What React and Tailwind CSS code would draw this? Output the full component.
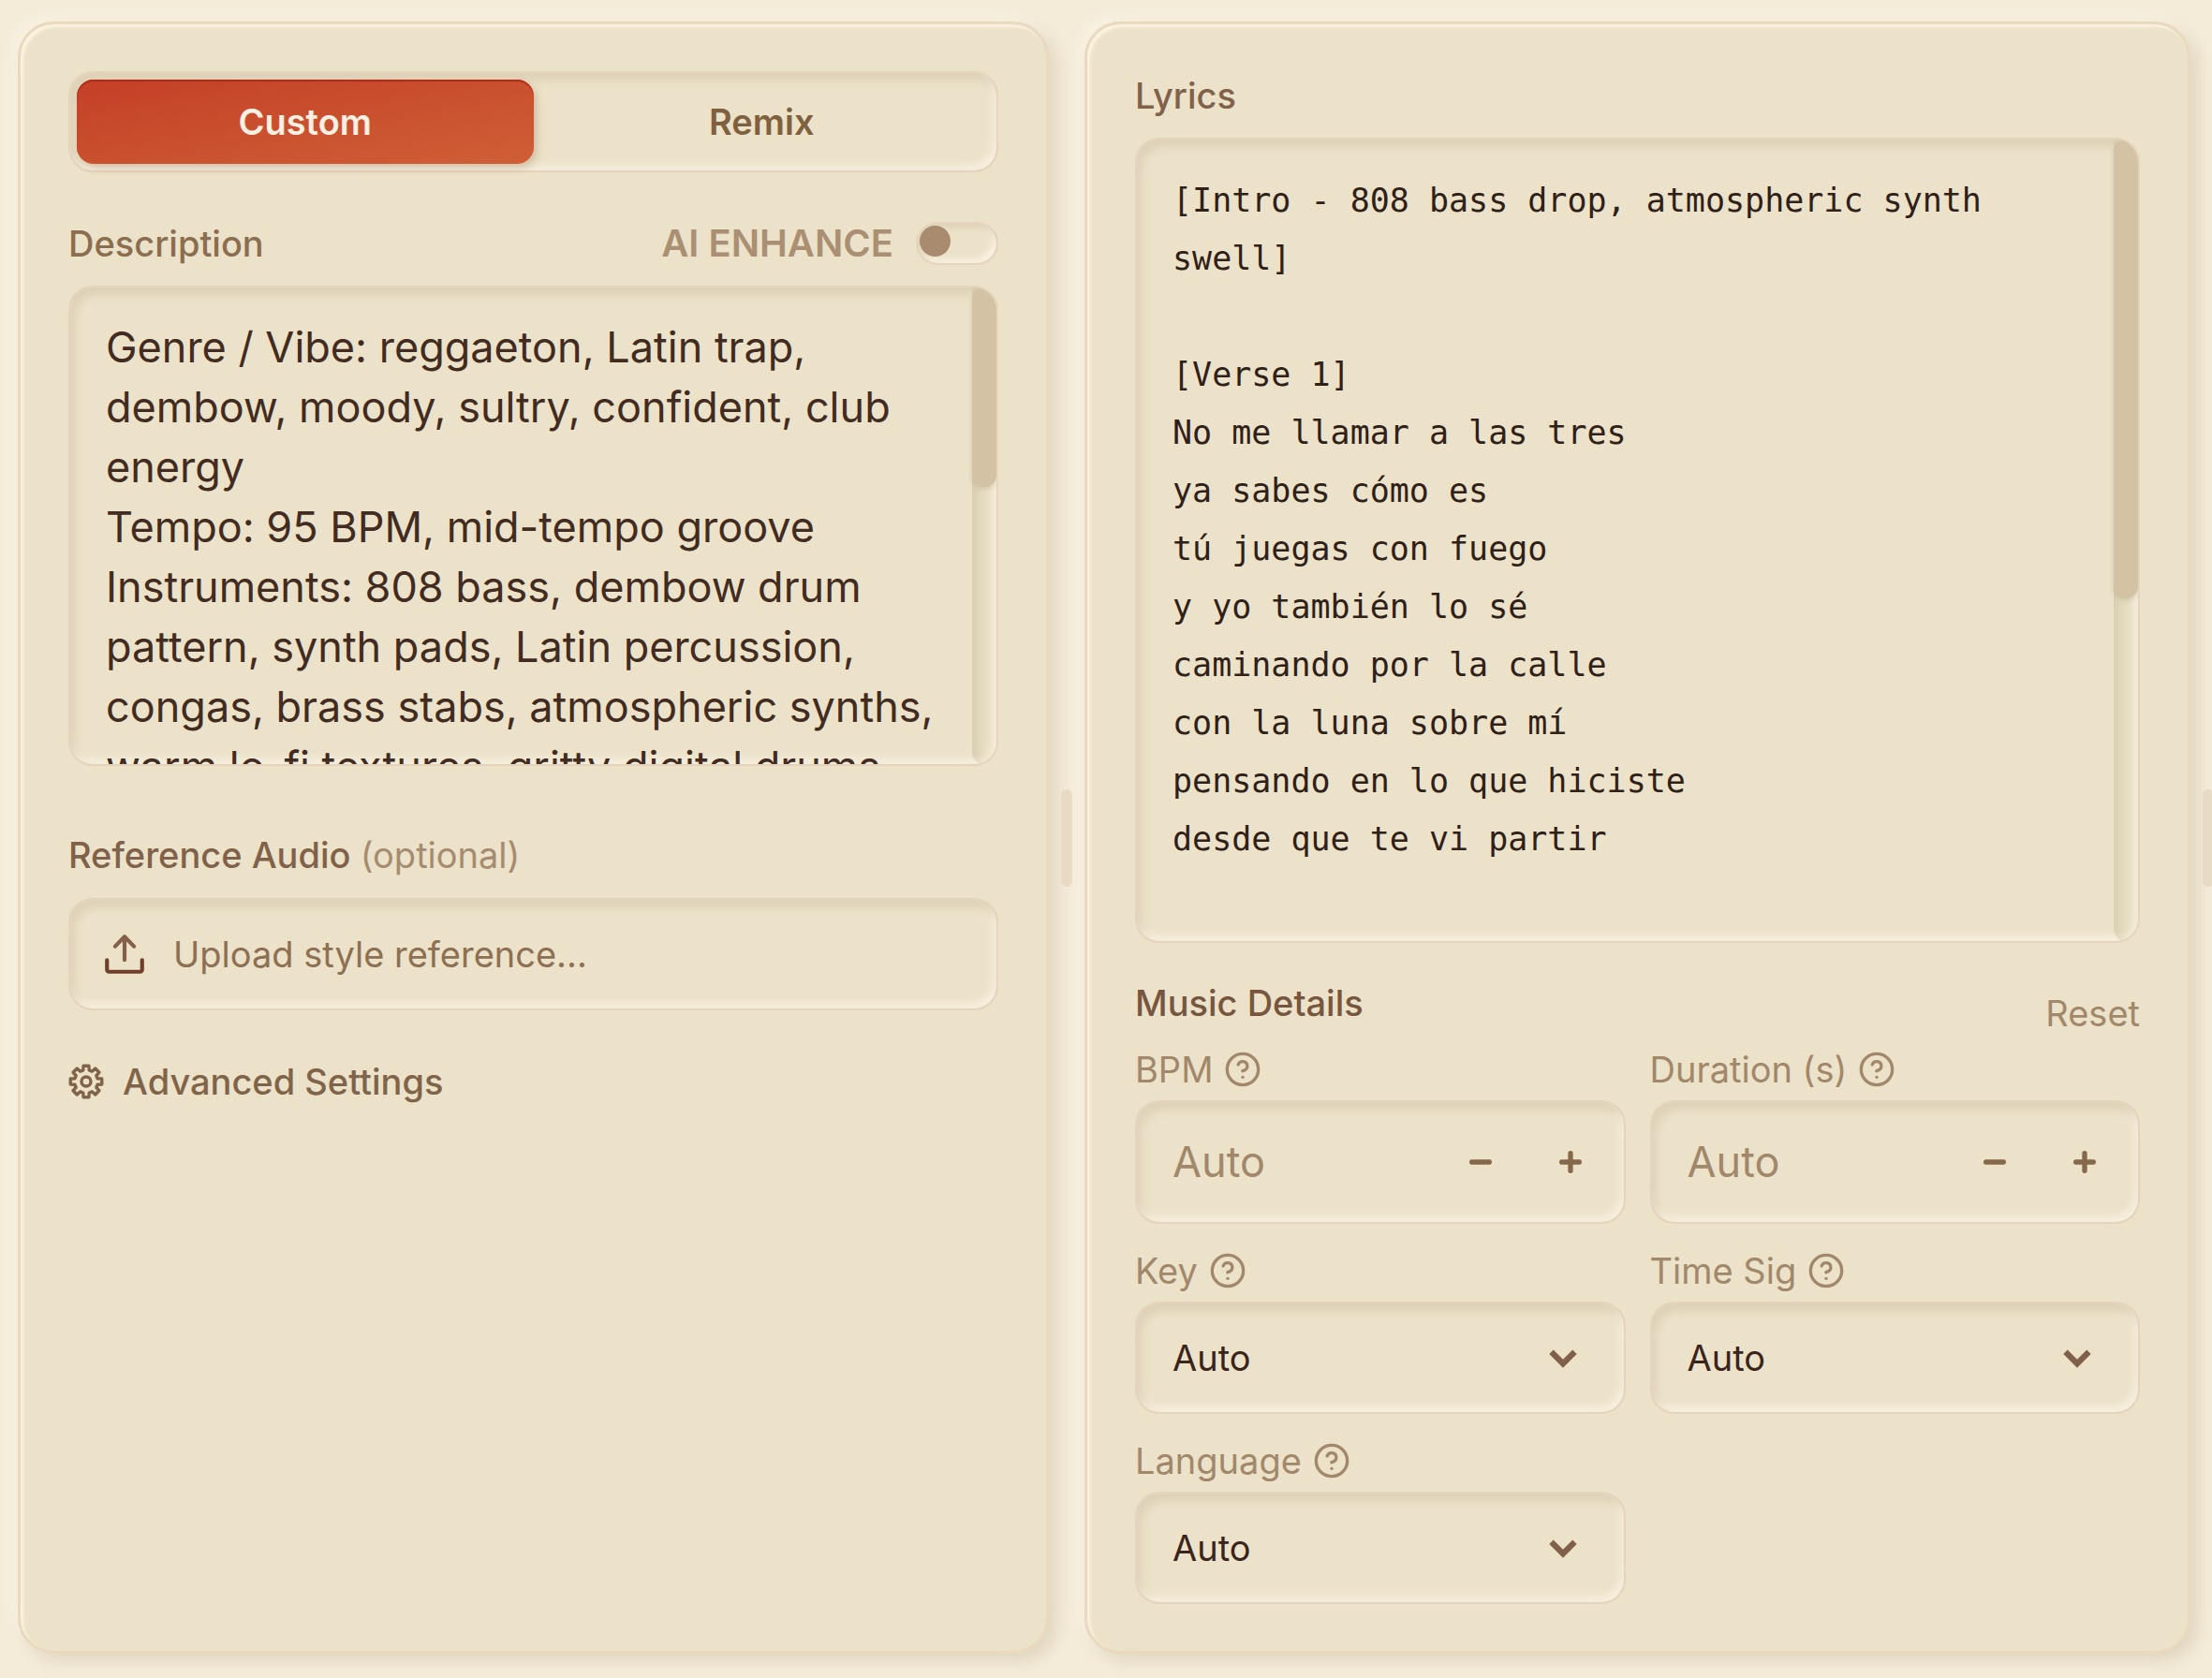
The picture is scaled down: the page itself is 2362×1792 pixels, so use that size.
import React, { useState } from 'react';
import { Minus, Plus, CircleHelp, ChevronDown } from 'lucide-react';

const DESCRIPTION = `Genre / Vibe: reggaeton, Latin trap, dembow, moody, sultry, confident, club energy
Tempo: 95 BPM, mid-tempo groove
Instruments: 808 bass, dembow drum pattern, synth pads, Latin percussion, congas, brass stabs, atmospheric synths, warm lo-fi textures, gritty digital drums`;

const LYRICS = `[Intro - 808 bass drop, atmospheric synth swell]

[Verse 1]
No me llamar a las tres
ya sabes cómo es
tú juegas con fuego
y yo también lo sé
caminando por la calle
con la luna sobre mí
pensando en lo que hiciste
desde que te vi partir`;

const panel =
  'flex flex-col min-w-0 rounded-[38px] border-3 border-[#e8d9bf] bg-[#ece2c9] px-[51px] pb-[50px] shadow-[inset_3px_3px_3px_#fcf4e0,8px_8px_18px_rgba(150,125,90,0.2),-6px_-6px_16px_rgba(255,252,240,0.5)]';

const well =
  'rounded-[26px] border-2 border-[#e5d4bc] bg-[#ece2c9] shadow-[inset_5px_8px_10px_rgba(140,120,85,0.15),inset_-4px_-6px_8px_rgba(255,250,238,0.55)]';

// Sunken text box with its own scroll track on the right
const ScrollBox = ({ className, thumb, children }) => (
  <div className={`flex overflow-hidden ${well} ${className}`}>
    {children}
    <div className="w-[26px] shrink-0 rounded-b-[20px] bg-[#e6ddc2] shadow-[inset_6px_4px_8px_rgba(140,120,85,0.15),inset_-6px_-5px_7px_rgba(250,243,226,0.7)]">
      <div className={`w-full rounded-full bg-[#d3c2a3] shadow-[0_2px_5px_rgba(140,120,85,0.25)] ${thumb}`} />
    </div>
  </div>
);

const UploadIcon = () => (
  <svg width="50" height="50" viewBox="0 0 24 24" fill="none" strokeWidth="2" strokeLinecap="round" strokeLinejoin="round">
    <path stroke="#82604a" d="M12 3v12M7.2 8 12 3l4.8 5" />
    <path stroke="#703f2a" d="M3 15v5a1 1 0 0 0 1 1h16a1 1 0 0 0 1-1v-5" />
  </svg>
);

// Eight square teeth around the hub
const gearPoints = Array.from({ length: 8 }, (_, i) =>
  [[-15, 12.5], [-10, 17], [10, 17], [15, 12.5]].map(([offset, r]) => {
    const a = ((i * 45 + offset) * Math.PI) / 180;
    return `${(19 + r * Math.cos(a)).toFixed(2)},${(19 + r * Math.sin(a)).toFixed(2)}`;
  })
)
  .flat()
  .join(' ');

const GearIcon = () => (
  <svg width="38" height="38" viewBox="0 0 38 38" fill="none" stroke="currentColor" strokeWidth="3.4" strokeLinejoin="round">
    <polygon points={gearPoints} />
    <circle cx="19" cy="19" r="5" />
  </svg>
);

const FieldLabel = ({ id, children }) => (
  <div className="mb-[10px] flex items-center gap-3 text-[#a1886b]">
    <label htmlFor={id}>{children}</label>
    <CircleHelp size={40} strokeWidth={2} />
  </div>
);

const NumberField = ({ id, label }) => {
  const [value, setValue] = useState('');
  return (
    <div>
      <FieldLabel id={id}>{label}</FieldLabel>
      <div className={`flex h-[132px] items-center pl-[38px] pr-[9px] ${well}`}>
        <input
          id={id}
          type="text"
          placeholder="Auto"
          value={value}
          onChange={(e) => setValue(e.target.value)}
          className="min-w-0 flex-1 bg-transparent text-[45px] leading-[64px] placeholder:text-[#a1886b] focus:outline-none"
        />
        <button
          aria-label={`Decrease ${label}`}
          onClick={() => setValue(String((Number(value) || 0) - 1))}
          className="flex h-[96px] w-[96px] items-center justify-center text-[#86694b]"
        >
          <Minus size={32} strokeWidth={4} />
        </button>
        <button
          aria-label={`Increase ${label}`}
          onClick={() => setValue(String((Number(value) || 0) + 1))}
          className="flex h-[96px] w-[96px] items-center justify-center text-[#86694b]"
        >
          <Plus size={32} strokeWidth={4} />
        </button>
      </div>
    </div>
  );
};

const SelectField = ({ id, label }) => (
  <div>
    <FieldLabel id={id}>{label}</FieldLabel>
    <div className="relative">
      <select
        id={id}
        className={`h-[120px] w-full appearance-none pl-[38px] text-[38px] text-[#3a241b] focus:outline-none ${well}`}
      >
        <option>Auto</option>
      </select>
      <ChevronDown
        size={50}
        strokeWidth={3}
        strokeLinecap="butt"
        strokeLinejoin="miter"
        className="pointer-events-none absolute right-[42px] top-[35px] text-[#80604a]"
      />
    </div>
  </div>
);

const Handle = () => <div className="h-[104px] w-[12px] shrink-0 rounded-full bg-[#e8dbc5]" />;

export default function App() {
  const [mode, setMode] = useState('custom');
  const [enhance, setEnhance] = useState(false);

  const tab = (name) =>
    `h-[90px] flex-1 rounded-[18px] font-semibold ${
      mode === name
        ? 'bg-linear-to-br from-[#c43f27] to-[#cf5f36] text-[#fdf0e2] shadow-[inset_0_2px_1px_#b02c18,3px_4px_8px_rgba(140,100,60,0.3)]'
        : 'text-[#80613f]'
    }`;

  return (
    <div className="flex min-h-screen overflow-hidden bg-[#f4ecd9] pb-[26px] pl-[19px] pt-[23px] font-['Inter',sans-serif] text-[38px] leading-[46px]">
      {/* Style panel */}
      <section className={`flex-[993] pt-[50px] ${panel}`}>
        <div className={`flex p-[7px] ${well}`}>
          <button className={tab('custom')} onClick={() => setMode('custom')}>Custom</button>
          <button className={tab('remix')} onClick={() => setMode('remix')}>Remix</button>
        </div>

        <div className="mt-[53px] flex items-center justify-between">
          <label htmlFor="description" className="font-medium text-[#8b6d50]">Description</label>
          <label className="flex cursor-pointer items-center gap-6 text-[40px] font-semibold text-[#aa8f73]">
            AI ENHANCE
            <input
              type="checkbox"
              role="switch"
              checked={enhance}
              onChange={(e) => setEnhance(e.target.checked)}
              className="h-[46px] w-[88px] appearance-none rounded-full border-2 border-[#e5d4bc] bg-[#ece2c9] p-[2px] shadow-[inset_4px_4px_6px_rgba(140,120,85,0.15),inset_-4px_-5px_6px_rgba(255,250,238,0.6)] before:block before:h-[33px] before:w-[33px] before:rounded-full before:bg-[#a98c70] checked:before:ml-auto"
            />
          </label>
        </div>

        <ScrollBox className="mt-[22px] h-[513px]" thumb="h-[213px]">
          <textarea
            id="description"
            defaultValue={DESCRIPTION}
            className="min-w-0 flex-1 resize-none overflow-hidden bg-transparent pl-[38px] pr-[30px] pt-[32px] text-[45px] leading-[64px] text-[#422c22] focus:outline-none"
          />
        </ScrollBox>

        <div className="mt-[72px] font-medium text-[#80614a]">
          Reference Audio <span className="font-normal text-[#a58c70]">(optional)</span>
        </div>
        <button className={`mt-[23px] flex h-[120px] items-center gap-[27px] pl-[33px] text-left text-[#8d7053] ${well}`}>
          <UploadIcon />
          Upload style reference...
        </button>

        <button className="mt-[53px] flex items-center gap-5 self-start font-medium text-[#80644a]">
          <GearIcon />
          Advanced Settings
        </button>
      </section>

      <div className="flex w-[38px] shrink-0 items-center justify-center">
        <Handle />
      </div>

      {/* Lyrics panel */}
      <section className={`flex-[1073] pt-[53px] ${panel}`}>
        <label htmlFor="lyrics" className="font-medium text-[#80614a]">Lyrics</label>
        <ScrollBox className="mt-[22px] min-h-[860px] flex-1" thumb="h-[490px]">
          <textarea
            id="lyrics"
            defaultValue={LYRICS}
            className="min-w-0 flex-1 resize-none overflow-hidden bg-transparent pl-[38px] pr-[30px] pt-[34px] font-['DejaVu_Sans_Mono',monospace] text-[35px] leading-[62px] text-[#2f2018] focus:outline-none"
          />
        </ScrollBox>

        <div className="mt-[41px] flex h-[57px] justify-between">
          <h2 className="font-medium text-[#775640]">Music Details</h2>
          <button className="self-end text-[#a1886b]">Reset</button>
        </div>

        <div className="mt-[14px] grid grid-cols-2 gap-x-[26px] gap-y-[27px]">
          <NumberField id="bpm" label="BPM" />
          <NumberField id="duration" label="Duration (s)" />
          <SelectField id="key" label="Key" />
          <SelectField id="time-sig" label="Time Sig" />
          <SelectField id="language" label="Language" />
        </div>
      </section>

      <div className="flex w-[23px] shrink-0 items-center overflow-hidden pl-[13px]">
        <Handle />
      </div>
    </div>
  );
}
